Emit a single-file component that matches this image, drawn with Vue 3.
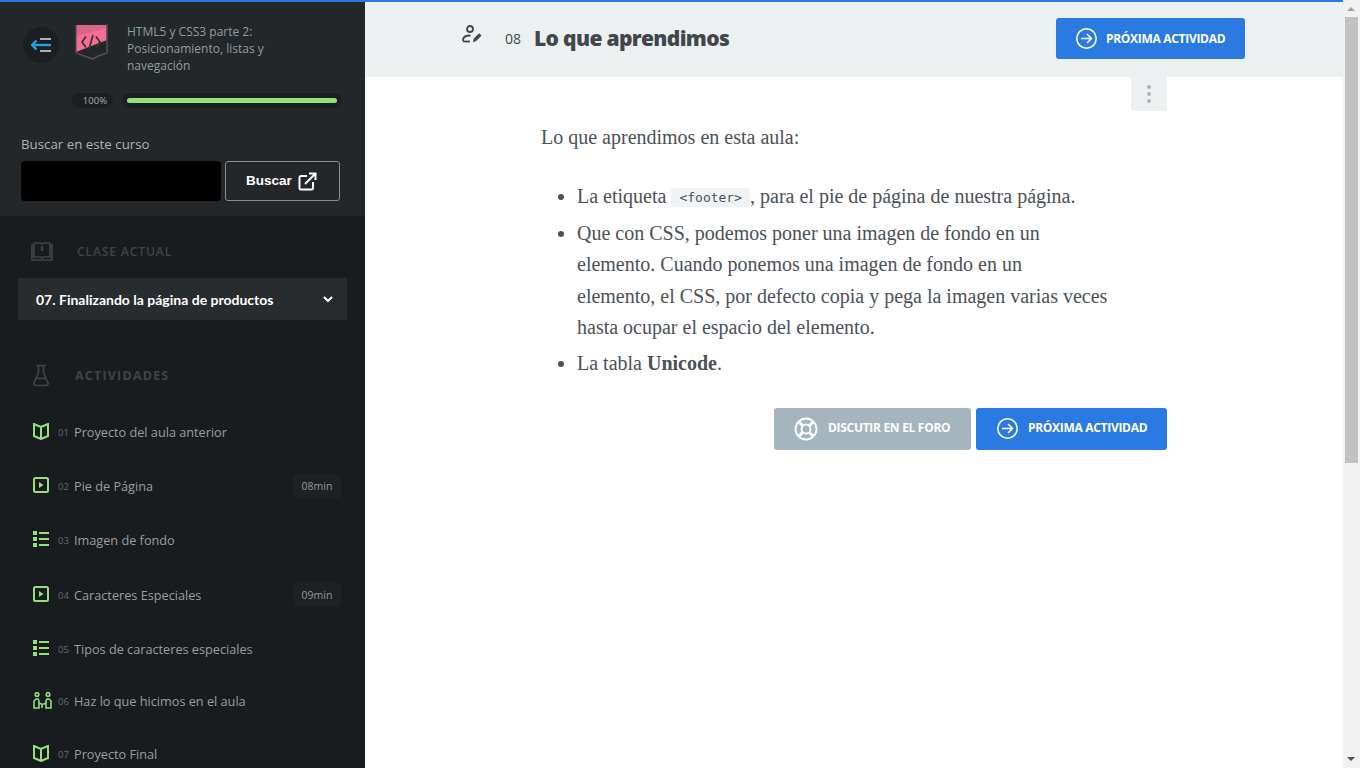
<template>
  <div class="page">
    <aside class="sidebar">
      <div class="side-top">
        <div class="course">
          <button class="back">
            <svg width="21" height="16" viewBox="0 0 21 16" fill="none">
              <path d="M1 8h19" stroke="#2a9fe0" stroke-width="2.4" />
              <path d="M5.500 3.500 1.200 8l4.300 4.500" stroke="#2a9fe0" stroke-width="2.4" />
              <path d="M9 2h11M9 14h11" stroke="#a9b2b6" stroke-width="2" />
            </svg>
          </button>
          <svg class="logo" width="36" height="38" viewBox="0 0 36 38">
            <path d="M2 2h31v15L2 29z" fill="#f56d96" />
            <path d="M2 2h31v3L2 13z" fill="#d9658a" />
            <path d="M33 1v29l-9 3-5 3-17-6" fill="none" stroke="#4a4f52" stroke-width="1.600" />
            <path d="M2 2v28" fill="none" stroke="#4a4f52" stroke-width="1.200" />
            <path d="M12 13.500 8 19l4 5.500M22 13.500l4 5.500-4 5.500M19 12l-4 14" fill="none" stroke="#3a3236" stroke-width="1.700" />
          </svg>
          <p class="course-name">HTML5 y CSS3 parte 2: Posicionamiento, listas y navegación</p>
        </div>
        <div class="progress">
          <span class="percent">100%</span>
          <div class="track"><div class="fill" :style="{ width: progress + '%' }"></div></div>
        </div>
        <label class="search-label">Buscar en este curso</label>
        <div class="search">
          <div class="search-input"></div>
          <button class="search-btn">
            <span>Buscar</span>
            <svg width="19" height="19" viewBox="0 0 19 19" fill="none" stroke="#fff" stroke-width="2">
              <path d="M9 4H3a1.500 1.500 0 0 0-1.500 1.500V16A1.500 1.500 0 0 0 3 17.500h10.500A1.500 1.500 0 0 0 15 16v-6" />
              <path d="M7 12 17.500 1.500M11 1.500h6.500V8" />
            </svg>
          </button>
        </div>
      </div>

      <div class="side-body">
        <div class="side-title current">
          <svg width="22" height="19" viewBox="0 0 22 19" fill="none" stroke="#3d4449" stroke-width="1.700">
            <path d="M3 3H1v15h20V3h-2" />
            <path d="M3 15V1h6.500l1.500 1 1.500-1H19v14h-7l-1 1.500L10 15z" />
            <path d="M11 4v5" stroke-width="2.200" />
          </svg>
          <span>CLASE ACTUAL</span>
        </div>
        <div class="lesson">
          <span>07. Finalizando la página de productos</span>
          <svg width="10" height="7" viewBox="0 0 10 7" fill="none" stroke="#fff" stroke-width="2">
            <path d="M1 1l4 4 4-4" />
          </svg>
        </div>
        <div class="side-title activities">
          <svg width="16" height="23" viewBox="0 0 16 23" fill="none" stroke="#3d4449" stroke-width="1.700">
            <path d="M3 1.500h10M5.500 1.500v7L1.200 18.500A2 2 0 0 0 3 21.500h10a2 2 0 0 0 1.800-3L10.500 8.500v-7M3.500 14.500h9" />
          </svg>
          <span>ACTIVIDADES</span>
        </div>
        <ul class="tasks">
          <li v-for="task in tasks" :key="task.num" class="task" :class="task.nudge">
            <span class="task-icon">
              <svg v-if="task.icon === 'book'" width="16" height="17" viewBox="0 0 16 17" fill="none" stroke="#93e07c" stroke-width="2">
                <path d="M8 4 1 1v12l7 3 7-3V1zM8 4v12" />
              </svg>
              <svg v-else-if="task.icon === 'play'" width="16" height="16" viewBox="0 0 16 16" fill="none" stroke="#93e07c" stroke-width="2">
                <rect x="1" y="1" width="14" height="14" rx="1.500" />
                <path d="M6 5l4.500 3L6 11z" fill="#93e07c" stroke="none" />
              </svg>
              <svg v-else-if="task.icon === 'list'" width="16" height="16" viewBox="0 0 16 16" fill="#93e07c">
                <rect x="0" y="0" width="4" height="4" />
                <rect x="0" y="6" width="4" height="4" />
                <rect x="0" y="12" width="4" height="4" />
                <rect x="6" y="1" width="10" height="2" />
                <rect x="6" y="7" width="10" height="2" />
                <rect x="6" y="13" width="10" height="2" />
              </svg>
              <svg v-else width="19" height="17" viewBox="0 0 19 17" fill="none" stroke="#93e07c" stroke-width="1.600">
                <circle cx="4" cy="2.500" r="1.800" />
                <circle cx="15" cy="2.500" r="1.800" />
                <path d="M1 16V9l2-2h2l1 2v7zM18 16V9l-2-2h-2l-1 2v7zM6 11l3.500 1.500L13 11M9 13v3" />
              </svg>
            </span>
            <span class="task-num">{{ task.num }}</span>
            <span class="task-name">{{ task.name }}</span>
            <span v-if="task.time" class="task-time">{{ task.time }}</span>
          </li>
        </ul>
      </div>
    </aside>

    <main class="main">
      <header class="head">
        <svg class="head-icon" width="20" height="18" viewBox="0 0 20 18" fill="none" stroke="#3f474d" stroke-width="1.800">
          <circle cx="8" cy="4" r="3" />
          <path d="M1 16v-1C1 12 4 10.500 8.500 10.500" />
          <path d="M1 16.500h7" />
          <path d="M11.500 16.500l.8-3 4.700-4.700 2 1.700-4.700 5z" fill="#3f474d" stroke-width="1" />
        </svg>
        <span class="head-num">08</span>
        <h1>Lo que aprendimos</h1>
        <a class="btn btn-blue head-btn">
          <svg width="21" height="21" viewBox="0 0 21 21" fill="none" stroke="#fff" stroke-width="1.500">
            <circle cx="10.500" cy="10.500" r="9.700" />
            <path d="M5 10.500h10.500M11 6l4.500 4.500L11 15" />
          </svg>
          <span>PRÓXIMA ACTIVIDAD</span>
        </a>
      </header>

      <section class="content">
        <div class="menu-tab"><i></i><i></i><i></i></div>
        <p class="intro">Lo que aprendimos en esta aula:</p>
        <ul class="points">
          <li>La etiqueta <code>&lt;footer&gt;</code>, para el pie de página de nuestra página.</li>
          <li>Que con CSS, podemos poner una imagen de fondo en un<br />elemento. Cuando ponemos una imagen de fondo en un<br />elemento, el CSS, por defecto copia y pega la imagen varias veces<br />hasta ocupar el espacio del elemento.</li>
          <li>La tabla <strong>Unicode</strong>.</li>
        </ul>
        <div class="actions">
          <a class="btn btn-grey">
            <svg width="24" height="24" viewBox="0 0 24 24" fill="none" stroke="#fff" stroke-width="1.800">
              <circle cx="12" cy="12" r="10.500" />
              <circle cx="12" cy="12" r="4.500" />
              <path d="M4.500 4.500l4.300 4.300M19.500 4.500l-4.300 4.300M4.500 19.500l4.300-4.300M19.500 19.500l-4.300-4.300" stroke-width="3" />
            </svg>
            <span>DISCUTIR EN EL FORO</span>
          </a>
          <a class="btn btn-blue">
            <svg width="21" height="21" viewBox="0 0 21 21" fill="none" stroke="#fff" stroke-width="1.500">
              <circle cx="10.500" cy="10.500" r="9.700" />
              <path d="M5 10.500h10.500M11 6l4.500 4.500L11 15" />
            </svg>
            <span>PRÓXIMA ACTIVIDAD</span>
          </a>
        </div>
      </section>
    </main>

    <div class="scrollbar">
      <span class="arrow up"></span>
      <div class="thumb"></div>
      <span class="arrow down"></span>
    </div>
    <div class="top-line"></div>
  </div>
</template>

<script setup>
const progress = 100

const tasks = [
  { num: '01', name: 'Proyecto del aula anterior', icon: 'book' },
  { num: '02', name: 'Pie de Página', icon: 'play', time: '08min' },
  { num: '03', name: 'Imagen de fondo', icon: 'list' },
  { num: '04', name: 'Caracteres Especiales', icon: 'play', time: '09min', nudge: 'down' },
  { num: '05', name: 'Tipos de caracteres especiales', icon: 'list' },
  { num: '06', name: 'Haz lo que hicimos en el aula', icon: 'people', nudge: 'up2' },
  { num: '07', name: 'Proyecto Final', icon: 'book', nudge: 'up1' },
]
</script>

<style>
html,
body {
  margin: 0;
  overflow: hidden;
}
</style>

<style scoped>
.page {
  position: relative;
  display: flex;
  height: 768px;
  overflow: hidden;
  background: #fff;
  font-family: 'Open Sans', sans-serif;
}

.top-line {
  position: absolute;
  top: 0;
  left: 0;
  width: 1343px;
  height: 2px;
  background: #2a7ae2;
}

/* sidebar */
.sidebar {
  flex: 0 0 365px;
  display: flex;
  flex-direction: column;
  background: #191c1f;
  overflow: hidden;
}

.side-top {
  flex: none;
  height: 216px;
  box-sizing: border-box;
  padding: 23px 23px 0 21px;
  background: #23272a;
}

.course {
  display: flex;
  align-items: flex-start;
  height: 62px;
}

.back {
  flex: none;
  display: flex;
  align-items: center;
  justify-content: center;
  width: 36px;
  height: 36px;
  margin: 4px 15px 0 2px;
  padding: 0;
  border: 0;
  border-radius: 50%;
  background: #1b1f22;
}

.logo {
  flex: none;
  margin-right: 17px;
}

.course-name {
  width: 150px;
  margin: 0;
  font-size: 12px;
  line-height: 17px;
  color: #8f9ca3;
}

.progress {
  display: flex;
  align-items: center;
  gap: 9px;
  margin: 8px 0 0 51px;
}

.percent {
  flex: none;
  width: 41px;
  height: 15px;
  box-sizing: border-box;
  padding-right: 6px;
  border-radius: 8px;
  background: #1b1f22;
  font-size: 9.500px;
  line-height: 15px;
  text-align: right;
  color: #a3acb0;
}

.track {
  flex: none;
  width: 210px;
  height: 5px;
  padding: 5px;
  border-radius: 8px;
  background: #1b1f22;
}

.fill {
  height: 100%;
  border-radius: 3px;
  background: #96e07a;
}

.search-label {
  display: block;
  margin-top: 27px;
  font-size: 13.300px;
  line-height: 18px;
  color: #aeb2b4;
}

.search {
  display: flex;
  gap: 4px;
  margin-top: 8px;
}

.search-input {
  width: 200px;
  height: 40px;
  border-radius: 4px;
  background: #000;
}

.search-btn {
  display: flex;
  align-items: center;
  gap: 6px;
  width: 115px;
  height: 40px;
  box-sizing: border-box;
  padding: 0 0 0 20px;
  border: 1px solid #8a8d8f;
  border-radius: 3px;
  background: transparent;
  font-family: 'Liberation Sans', sans-serif;
  font-size: 13.500px;
  font-weight: 700;
  color: #fff;
}

.search-btn span {
  margin-top: -2px;
}

.side-body {
  flex: 1;
  padding: 0 18px;
}

.side-title {
  display: flex;
  align-items: center;
  font-weight: 600;
  color: #3d4449;
}

.side-title.current {
  height: 24px;
  margin: 23px 0 0 13px;
  font-size: 12.200px;
  letter-spacing: 0.8px;
}

.side-title.current span {
  margin-left: 24px;
}

.side-title.activities {
  height: 24px;
  margin: 43px 0 0 15px;
  font-size: 12.500px;
  font-weight: 700;
  letter-spacing: 1.200px;
}

.side-title.activities span {
  margin-left: 26px;
}

.lesson {
  display: flex;
  align-items: center;
  justify-content: space-between;
  height: 42px;
  margin-top: 15px;
  padding: 0 14px 0 18px;
  background: #282c2f;
  font-family: Lato, sans-serif;
  font-size: 14px;
  font-weight: 700;
  color: #fff;
}

.tasks {
  margin: 18px 0 0;
  padding: 0 6px 0 15px;
  list-style: none;
}

.task {
  display: flex;
  align-items: center;
  height: 54px;
}

.task.down {
  margin-top: 1px;
}

.task.up2 {
  margin-top: -2px;
}

.task.up1 {
  margin-top: -1px;
}

.task-icon {
  flex: none;
  display: flex;
  width: 25px;
  margin-top: -2px;
}

.task-num {
  flex: none;
  width: 16px;
  font-size: 9.500px;
  color: #62696e;
}

.task-name {
  flex: 1;
  font-size: 12.700px;
  color: #9a9d9f;
}

.task-time {
  width: 48px;
  height: 24px;
  border-radius: 3px;
  background: #1e2124;
  font-size: 10.500px;
  line-height: 24px;
  text-align: center;
  color: #92979a;
}

/* main */
.main {
  flex: 1;
  min-width: 0;
}

.head {
  display: flex;
  align-items: center;
  height: 77px;
  box-sizing: border-box;
  padding: 2px 98px 0 97px;
  background: #edf0f1;
  color: #3f474d;
}

.head-icon {
  margin: -11px 0 0;
}

.head-num {
  margin: -2px 0 0 23px;
  font-size: 14px;
}

.head h1 {
  margin: -4px 0 0 13px;
  font-size: 21px;
  font-weight: 800;
  letter-spacing: -0.650px;
  color: #3f474d;
}

.btn {
  display: flex;
  align-items: center;
  height: 42px;
  box-sizing: border-box;
  border-radius: 3px;
  font-family: 'Open Sans', sans-serif;
  font-size: 12px;
  font-weight: 700;
  letter-spacing: -0.300px;
  color: #fff;
}

.btn span {
  margin-top: -3px;
}

.btn-blue {
  width: 191px;
  padding-left: 21px;
  gap: 10px;
  background: #2a7ae2;
}

.btn-grey {
  width: 197px;
  padding-left: 20px;
  gap: 10px;
  background: #a4b5bd;
}

.head-btn {
  width: 189px;
  height: 41px;
  margin-left: auto;
  padding-left: 20px;
  gap: 9px;
  margin-top: -2px;
}

.head-btn span {
  margin-top: -1px;
}

.content {
  position: relative;
  width: 626px;
  margin-left: 176px;
  font-family: 'Liberation Serif', serif;
  font-size: 20px;
  color: #4a5157;
}

.menu-tab {
  position: absolute;
  top: 0;
  right: 0;
  display: flex;
  flex-direction: column;
  align-items: center;
  justify-content: center;
  gap: 3px;
  width: 36px;
  height: 34px;
  border-radius: 0 0 3px 3px;
  background: #edf0f1;
}

.menu-tab i {
  width: 4px;
  height: 4px;
  border-radius: 50%;
  background: #a4b5bd;
}

.intro {
  margin: 0;
  padding-top: 44px;
  line-height: 32px;
}

.points {
  width: 560px;
  margin: 28px 0 0;
  padding: 0 0 0 36px;
}

.points li {
  margin-bottom: 4.500px;
  line-height: 31.500px;
}

.points li:first-child {
  margin-bottom: 5.200px;
}

.points code {
  position: relative;
  top: -1px;
  padding: 2px 8px;
  border-radius: 3px;
  background: #f0f3f5;
  font-family: 'DejaVu Sans Mono', monospace;
  font-size: 13px;
  line-height: 1;
}

.points strong {
  font-weight: 700;
}

.actions {
  display: flex;
  justify-content: flex-end;
  gap: 5px;
  margin-top: 28.300px;
}

/* scrollbar */
.scrollbar {
  flex: 0 0 17px;
  display: flex;
  flex-direction: column;
  background: #f1f1f1;
}

.arrow {
  flex: none;
  height: 17px;
  position: relative;
}

.arrow::after {
  content: '';
  position: absolute;
  left: 4px;
  border-left: 4px solid transparent;
  border-right: 4px solid transparent;
}

.arrow.up::after {
  top: 7px;
  border-bottom: 4px solid #a3a3a3;
}

.arrow.down {
  margin-top: auto;
}

.arrow.down::after {
  top: 6px;
  border-top: 4px solid #505050;
}

.thumb {
  height: 446px;
  margin: 0 2px;
  background: #c1c1c1;
}
</style>
